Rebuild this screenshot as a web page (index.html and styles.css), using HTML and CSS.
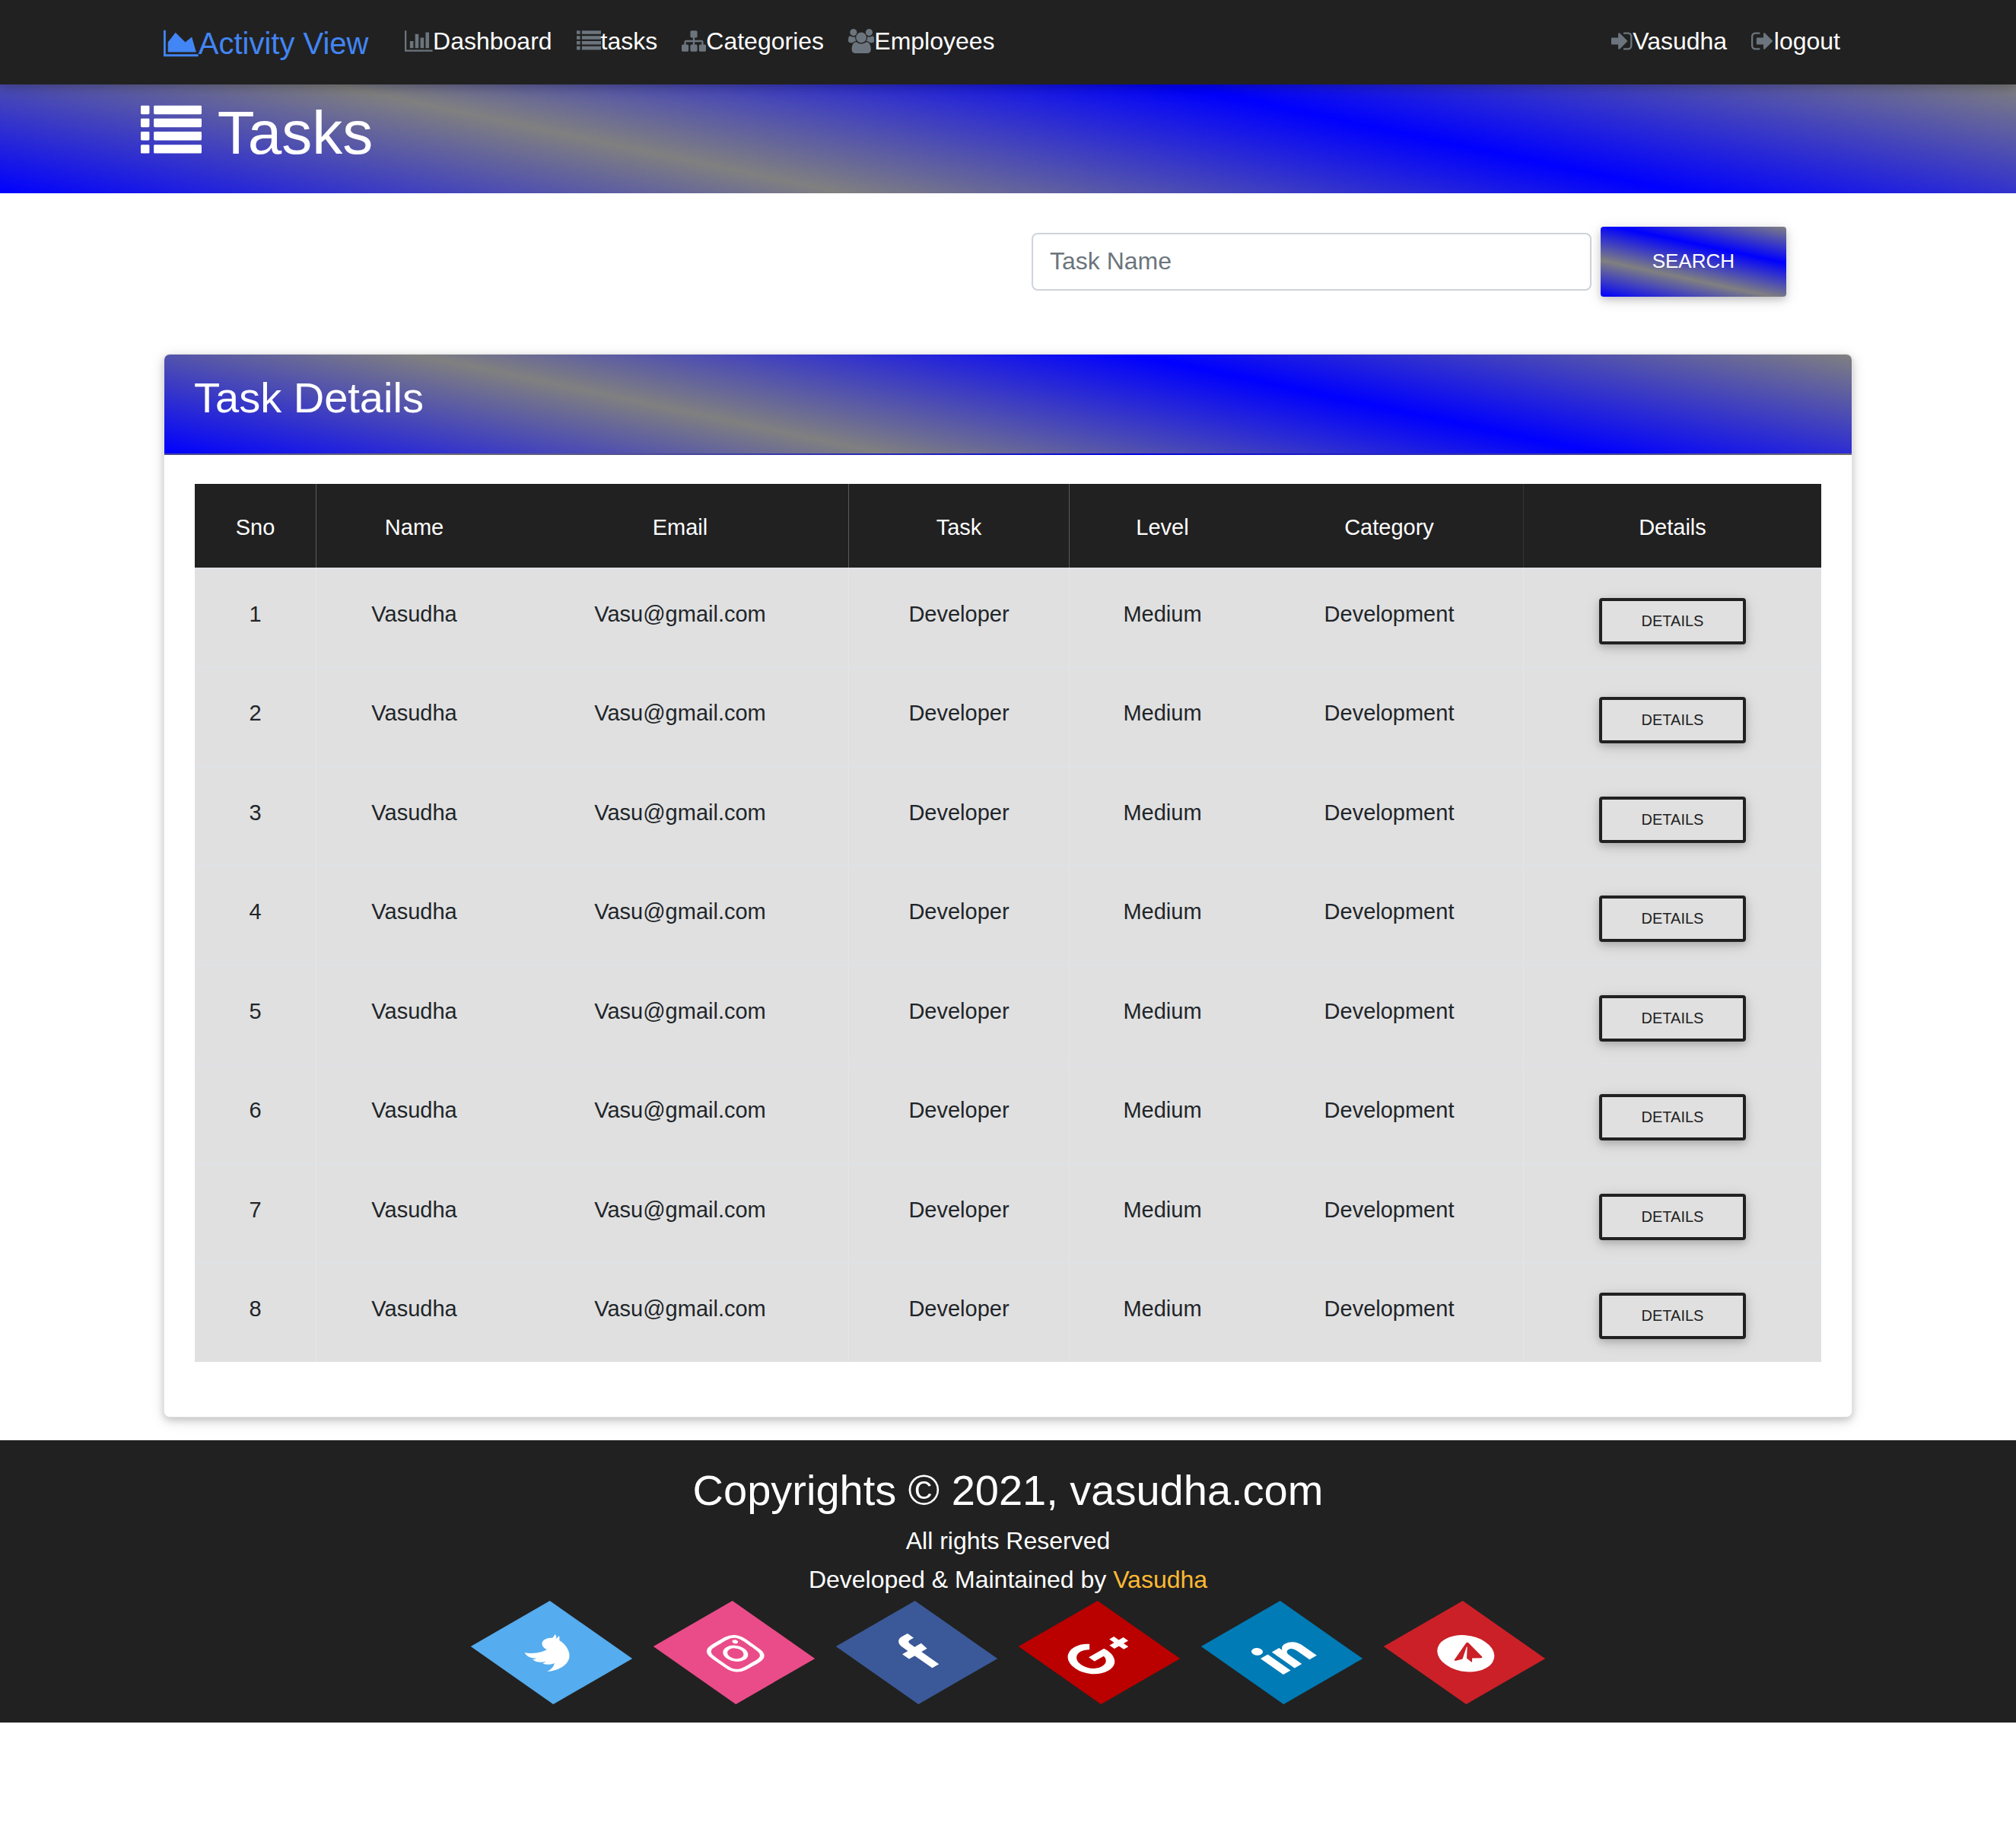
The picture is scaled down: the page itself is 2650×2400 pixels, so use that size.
FILE: index.html
```html
<!DOCTYPE html>
<html lang="en">
<head>
<meta charset="utf-8">
<meta name="viewport" content="width=device-width, initial-scale=1">
<title>Activity View - Tasks</title>
<link rel="stylesheet" href="styles.css">
</head>
<body>
<nav class="navbar">
  <div class="container navbar-inner">
    <a class="brand" href="#"><svg class="brand-icon" viewBox="0 0 2048 1792" aria-hidden="true"><path d="M2048 1536v128h-2048v-1536h128v1408h1920zm-384-1024l256 896h-1664v-576l448-576 576 576z"/></svg>Activity View</a>
    <ul class="nav-list">
      <li><a class="nav-link" href="#"><svg class="nav-icon" viewBox="0 0 2048 1792" aria-hidden="true"><path d="M640 896v512h-256v-512h256zm384-512v1024h-256v-1024h256zm1024 1152v128h-2048v-1536h128v1408h1920zm-640-896v768h-256v-768h256zm384-384v1152h-256v-1152h256z"/></svg>Dashboard</a></li>
      <li><a class="nav-link" href="#"><svg class="nav-icon" viewBox="0 0 1792 1792" aria-hidden="true"><path d="M0 128h256v256H0zM0 512h256v256H0zM0 896h256v256H0zM0 1280h256v256H0zM384 128h1408v256H384zM384 512h1408v256H384zM384 896h1408v256H384zM384 1280h1408v256H384z"/></svg>tasks</a></li>
      <li><a class="nav-link" href="#"><svg class="nav-icon" viewBox="0 0 1792 1792" aria-hidden="true"><path d="M1792 1248v320q0 40-28 68t-68 28h-320q-40 0-68-28t-28-68v-320q0-40 28-68t68-28h96v-192h-512v192h96q40 0 68 28t28 68v320q0 40-28 68t-68 28h-320q-40 0-68-28t-28-68v-320q0-40 28-68t68-28h96v-192h-512v192h96q40 0 68 28t28 68v320q0 40-28 68t-68 28h-320q-40 0-68-28t-28-68v-320q0-40 28-68t68-28h96v-192q0-52 38-90t90-38h512v-192h-96q-40 0-68-28t-28-68v-320q0-40 28-68t68-28h320q40 0 68 28t28 68v320q0 40-28 68t-68 28h-96v192h512q52 0 90 38t38 90v192h96q40 0 68 28t28 68z"/></svg>Categories</a></li>
      <li><a class="nav-link" href="#"><svg class="nav-icon" viewBox="0 0 1920 1792" aria-hidden="true"><path d="M593 896q-162 5-265 128h-134q-82 0-138-40.5t-56-118.5q0-353 124-353 6 0 43.5 21t97.5 42.5 119 21.5q67 0 133-23-5 37-5 66 0 139 81 256zm1071 637q0 120-73 189.5t-194 69.5h-874q-121 0-194-69.5t-73-189.5q0-53 3.5-103.5t14-109 26.5-108.5 43-97.5 62-81 85.5-53.5 111.5-20q10 0 43 21.5t73 48 107 48 135 21.5 135-21.5 107-48 73-48 43-21.5q61 0 111.5 20t85.5 53.5 62 81 43 97.5 26.5 108.5 14 109 3.5 103.5zm-1024-1277q0 106-75 181t-181 75-181-75-75-181 75-181 181-75 181 75 75 181zm704 384q0 159-112.5 271.5t-271.5 112.5-271.5-112.5-112.5-271.5 112.5-271.5 271.5-112.5 271.5 112.5 112.5 271.5zm576 225q0 78-56 118.5t-138 40.5h-134q-103-123-265-128 81-117 81-256 0-29-5-66 66 23 133 23 59 0 119-21.5t97.5-42.5 43.5-21q124 0 124 353zm-128-609q0 106-75 181t-181 75-181-75-75-181 75-181 181-75 181 75 75 181z"/></svg>Employees</a></li>
    </ul>
    <ul class="nav-list nav-list-end">
      <li><a class="nav-link" href="#"><svg class="nav-icon" viewBox="0 0 1600 1792" aria-hidden="true"><path d="M1184 896q0 26-19 45l-544 544q-19 19-45 19t-45-19-19-45v-288h-448q-26 0-45-19t-19-45v-384q0-26 19-45t45-19h448v-288q0-26 19-45t45-19 45 19l544 544q19 19 19 45zm352-352v704q0 119-84.500 203.500t-203.500 84.500h-320q-13 0-22.500-9.500t-9.500-22.500q0-4-1-20t-.5-26.500 3-23.500 10-19.500 20.500-6.500h320q66 0 113-47t47-113v-704q0-66-47-113t-113-47h-312l-11.500-1-11.500-3-8-5.500-7-9-2-13.500q0-4-1-20t-.5-26.500 3-23.500 10-19.500 20.500-6.500h320q119 0 203.500 84.500t84.500 203.500z"/></svg>Vasudha</a></li>
      <li><a class="nav-link" href="#"><svg class="nav-icon" viewBox="0 0 1664 1792" aria-hidden="true"><path d="M640 1440q0 4 1 20t.5 26.500-3 23.500-10 19.500-20.500 6.500h-320q-119 0-203.500-84.500t-84.500-203.500v-704q0-119 84.500-203.500t203.500-84.500h320q13 0 22.500 9.500t9.500 22.500q0 4 1 20t.5 26.500-3 23.500-10 19.500-20.500 6.500h-320q-66 0-113 47t-47 113v704q0 66 47 113t113 47h312l11.500 1 11.500 3 8 5.500 7 9 2 13.500zm928-544q0 26-19 45l-544 544q-19 19-45 19t-45-19-19-45v-288h-448q-26 0-45-19t-19-45v-384q0-26 19-45t45-19h448v-288q0-26 19-45t45-19 45 19l544 544q19 19 19 45z"/></svg>logout</a></li>
    </ul>
  </div>
</nav>

<header class="page-header">
  <h1 class="page-title"><svg class="title-icon" viewBox="0 0 1792 1792" aria-hidden="true"><rect y="128" width="256" height="256" rx="32"/><rect y="512" width="256" height="256" rx="32"/><rect y="896" width="256" height="256" rx="32"/><rect y="1280" width="256" height="256" rx="32"/><rect x="384" y="128" width="1408" height="256" rx="32"/><rect x="384" y="512" width="1408" height="256" rx="32"/><rect x="384" y="896" width="1408" height="256" rx="32"/><rect x="384" y="1280" width="1408" height="256" rx="32"/></svg> Tasks</h1>
</header>

<main class="container">
  <form class="search-form">
    <input class="search-input" type="text" placeholder="Task Name" aria-label="Task Name">
    <button class="search-button" type="button">SEARCH</button>
  </form>

  <section class="card">
    <div class="card-header"><h2 class="card-title">Task Details</h2></div>
    <div class="card-body">
      <table class="task-table">
        <colgroup>
          <col class="col-sno"><col class="col-name"><col class="col-email"><col class="col-task"><col class="col-level"><col class="col-category"><col class="col-details">
        </colgroup>
        <thead>
          <tr><th>Sno</th><th>Name</th><th>Email</th><th>Task</th><th>Level</th><th>Category</th><th>Details</th></tr>
        </thead>
        <tbody>
          <tr><td>1</td><td>Vasudha</td><td>Vasu@gmail.com</td><td>Developer</td><td>Medium</td><td>Development</td><td><button class="details-button" type="button">DETAILS</button></td></tr>
          <tr><td>2</td><td>Vasudha</td><td>Vasu@gmail.com</td><td>Developer</td><td>Medium</td><td>Development</td><td><button class="details-button" type="button">DETAILS</button></td></tr>
          <tr><td>3</td><td>Vasudha</td><td>Vasu@gmail.com</td><td>Developer</td><td>Medium</td><td>Development</td><td><button class="details-button" type="button">DETAILS</button></td></tr>
          <tr><td>4</td><td>Vasudha</td><td>Vasu@gmail.com</td><td>Developer</td><td>Medium</td><td>Development</td><td><button class="details-button" type="button">DETAILS</button></td></tr>
          <tr><td>5</td><td>Vasudha</td><td>Vasu@gmail.com</td><td>Developer</td><td>Medium</td><td>Development</td><td><button class="details-button" type="button">DETAILS</button></td></tr>
          <tr><td>6</td><td>Vasudha</td><td>Vasu@gmail.com</td><td>Developer</td><td>Medium</td><td>Development</td><td><button class="details-button" type="button">DETAILS</button></td></tr>
          <tr><td>7</td><td>Vasudha</td><td>Vasu@gmail.com</td><td>Developer</td><td>Medium</td><td>Development</td><td><button class="details-button" type="button">DETAILS</button></td></tr>
          <tr><td>8</td><td>Vasudha</td><td>Vasu@gmail.com</td><td>Developer</td><td>Medium</td><td>Development</td><td><button class="details-button" type="button">DETAILS</button></td></tr>
        </tbody>
      </table>
    </div>
  </section>
</main>

<footer class="footer">
  <h2 class="copyright">Copyrights © 2021, vasudha.com</h2>
  <p class="footer-text">All rights Reserved</p>
  <p class="footer-text">Developed &amp; Maintained by <a class="footer-link" href="#">Vasudha</a></p>
  <ul class="social-list">
    <li><a class="social twitter" href="#" aria-label="Twitter"><svg class="social-icon" viewBox="0 0 1792 1792"><path d="M1684 408q-67 98-162 167 1 14 1 42 0 130-38 259.500t-115.500 248.500-184.500 210.500-258 146-323 54.500q-271 0-496-145 35 4 78 4 225 0 401-138-105-2-188-64.500t-114-159.500q33 5 61 5 43 0 85-11-112-23-185.500-111.500t-73.500-205.500v-4q68 38 146 41-66-44-105-115t-39-154q0-88 44-163 121 149 294.500 238.500t371.500 99.500q-8-38-8-74 0-134 94.500-228.500t228.500-94.500q140 0 236 102 109-21 205-78-37 115-142 178 93-10 186-50z"/></svg></a></li>
    <li><a class="social instagram" href="#" aria-label="Instagram"><svg class="social-icon" viewBox="0 0 1792 1792"><path d="M1152 896q0-106-75-181t-181-75-181 75-75 181 75 181 181 75 181-75 75-181zm138 0q0 164-115 279t-279 115-279-115-115-279 115-279 279-115 279 115 115 279zm108-410q0 38-27 65t-65 27-65-27-27-65 27-65 65-27 65 27 27 65zm-502-220q-7 0-76.500-.5t-105.500 0-96.500 3-103 10-71.500 18.500q-50 20-88 58t-58 88q-11 29-18.500 71.500t-10 103-3 96.500 0 105.500.5 76.500-.5 76.500 0 105.500 3 96.500 10 103 18.500 71.500q20 50 58 88t88 58q29 11 71.500 18.500t103 10 96.500 3 105.500 0 76.500-.5 76.500.5 105.500 0 96.500-3 103-10 71.500-18.500q50-20 88-58t58-88q11-29 18.500-71.500t10-103 3-96.500 0-105.500-.5-76.500.5-76.500 0-105.500-3-96.500-10-103-18.500-71.500q-20-50-58-88t-88-58q-29-11-71.500-18.500t-103-10-96.500-3-105.500 0-76.500.5zm768 630q0 229-5 317-10 208-124 322t-322 124q-88 5-317 5t-317-5q-208-10-322-124t-124-322q-5-88-5-317t5-317q10-208 124-322t322-124q88-5 317-5t317 5q208 10 322 124t124 322q5 88 5 317z"/></svg></a></li>
    <li><a class="social facebook" href="#" aria-label="Facebook"><svg class="social-icon" viewBox="0 0 1792 1792"><path d="M1343 12v264h-157q-86 0-116 36t-30 108v189h293l-39 296h-254v759h-306v-759h-255v-296h255v-218q0-186 104-288.500t277-102.500q147 0 228 12z"/></svg></a></li>
    <li><a class="social google" href="#" aria-label="Google Plus"><svg class="social-icon" viewBox="0 0 2304 1792"><path d="M1437 913q0 208-87 370.500t-248 254-369 91.500q-149 0-285-58t-234-156-156-234-58-285 58-285 156-234 234-156 285-58q286 0 491 192l-199 191q-117-113-292-113-123 0-227.500 62t-165.500 168.500-61 232.500 61 232.500 165.500 168.500 227.500 62q83 0 152.500-23t114.500-57.500 78.500-78.500 49-83 21.500-74h-416v-252h692q12 63 12 122zm867-122v210h-209v209h-210v-209h-209v-210h209v-209h210v209h209z"/></svg></a></li>
    <li><a class="social linkedin" href="#" aria-label="LinkedIn"><svg class="social-icon" viewBox="0 0 1792 1792"><path d="M477 625v991h-330v-991h330zm21-306q1 73-50.500 122t-135.500 49h-2q-82 0-132-49t-50-122q0-74 51.500-122.500t134.500-48.500 133 48.500 51 122.500zm1166 729v568h-329v-530q0-105-40.500-164.500t-126.500-59.500q-63 0-105.500 34.500t-63.500 85.500q-11 30-11 81v553h-329q2-399 2-647t-1-296l-1-48h329v144h-2q20-32 41-56t56.500-52 87-43.500 114.500-15.500q171 0 275 113.500t104 332.500z"/></svg></a></li>
    <li><a class="social telegram" href="#" aria-label="Telegram"><svg class="social-icon" viewBox="0 0 1792 1792"><path fill-rule="evenodd" d="M1189 1307l147-693q9-44-10.500-63t-51.500-7l-864 333q-29 11-39.500 25t-2.500 26.500 32 19.500l221 69 513-323q21-14 32-6 7 5-4 15l-415 375-16 228q23 0 45-22l108-105 224 165q64 36 81-37zm603-411q0 182-71 348t-191 286-286 191-348 71-348-71-286-191-191-286-71-348 71-348 191-286 286-191 348-71 348 71 286 191 191 286 71 348z"/></svg></a></li>
  </ul>
</footer>
</body>
</html>
```
FILE: styles.css
```css
* { box-sizing: border-box; }

:root {
  --dark: #212121;
  --stripes: linear-gradient(12deg, blue, gray, blue, gray);
  --shadow: 0 4px 10px rgba(0, 0, 0, .16), 0 4px 20px rgba(0, 0, 0, .12);
}

body {
  margin: 0;
  background: #fff;
  color: #212529;
  font-family: "Liberation Sans", Arial, sans-serif;
  font-size: 32px;
  line-height: 48px;
}

h1, h2, p, ul { margin: 0; padding: 0; font-weight: 400; }
ul { list-style: none; }
a { color: inherit; text-decoration: none; }
svg { fill: currentColor; }
button, input { font-family: inherit; }

.container {
  width: 100%;
  max-width: 2280px;
  margin: 0 auto;
  padding: 0 30px;
}

/* Top bar */
.navbar {
  position: relative;
  padding: 14px 0 15px;
  background: var(--dark);
  color: #fff;
  box-shadow: var(--shadow);
}
.navbar-inner { display: flex; align-items: flex-start; }
.brand {
  margin-right: 32px;
  padding: 13px 0 9px;
  color: #4285f4;
  font-size: 40px;
  line-height: 60px;
}
.brand-icon { height: 40px; vertical-align: -6px; }
.nav-list { display: flex; }
.nav-list-end { margin-left: auto; }
.nav-link { display: block; padding: 16px; }
.nav-icon { height: 32px; vertical-align: -5px; color: #6c757d; }

/* Page heading */
.page-header { padding: 16px 0 31px; background: var(--stripes); color: #fff; }
.page-title {
  max-width: 2280px;
  margin: 0 auto;
  font-size: 80px;
  line-height: 96px;
}
.title-icon { height: 80px; vertical-align: -11px; }

/* Search */
.search-form {
  display: flex;
  align-items: center;
  gap: 12px;
  max-width: 992px;
  margin: 44px 87px 75px auto;
}
.search-input {
  flex: 1;
  min-width: 0;
  height: 76px;
  padding: 10px 22px 12px;
  border: 2px solid #ced4da;
  border-radius: 8px;
  background: #fff;
  color: #495057;
  font-size: 32px;
}
.search-input::placeholder { color: #6c757d; opacity: 1; }
.search-button {
  padding: 26px 68px 28px;
  border: 0;
  border-radius: 4px;
  background: var(--stripes);
  box-shadow: var(--shadow);
  color: #fff;
  font-size: 26px;
  line-height: 38px;
}

/* Task card */
.card {
  margin-bottom: 30px;
  border: 1px solid #e4e4e4;
  border-radius: 8px;
  background: #fff;
  box-shadow: var(--shadow);
}
.card-header {
  padding: 23px 39px 40px;
  border-bottom: 2px solid rgba(0, 0, 0, .125);
  border-radius: 7px 7px 0 0;
  background: var(--stripes);
  color: #fff;
}
.card-title { font-size: 56px; line-height: 67px; }
.card-body { padding: 38px 40px 72px; }

.task-table {
  width: 100%;
  table-layout: fixed;
  border-spacing: 0;
  background: #e0e0e0;
  font-size: 29px;
  line-height: 43px;
  text-align: center;
}
.col-sno { width: 159px; }
.col-name { width: 258px; }
.col-email { width: 442px; }
.col-task { width: 290px; }
.col-level { width: 245px; }
.col-category { width: 352px; }
.col-details { width: 392px; }
.task-table th {
  height: 110px;
  padding: 36px 0 31px;
  background: var(--dark);
  color: #fff;
  font-weight: 400;
}
.task-table td {
  height: 130px;
  padding: 38px 0 28px;
  border-top: 2px solid #dee2e6;
  vertical-align: top;
}
.task-table tr:nth-child(even) td { height: 131px; }
.task-table td:nth-child(2),
.task-table td:nth-child(4),
.task-table td:nth-child(5),
.task-table td:nth-child(7) { border-left: 1px solid #e5e5e5; }
.task-table th:nth-child(2),
.task-table th:nth-child(4),
.task-table th:nth-child(5) { border-left: 1px solid #5a5a5a; }
.task-table th:nth-child(7) { border-left: 1px solid #333; }

.details-button {
  display: block;
  margin: 0 auto;
  padding: 11px 52px;
  border: 4px solid var(--dark);
  border-radius: 4px;
  background: transparent;
  box-shadow: var(--shadow);
  color: var(--dark);
  font-size: 20px;
  line-height: 31px;
}

/* Footer */
.footer {
  padding: 32px 0;
  background: var(--dark);
  color: #fff;
  text-align: center;
}
.copyright { margin-bottom: 8px; font-size: 56px; line-height: 67px; }
.footer-text { line-height: 51px; }
.footer-link { color: #ffbb33; }
.social-list {
  display: flex;
  justify-content: center;
  gap: 120px;
  margin-top: 10px;
}
.social {
  display: flex;
  align-items: center;
  justify-content: center;
  width: 120px;
  height: 120px;
  padding-top: 4px;
  transform: rotate(-30deg) skew(25deg);
}
.social-icon { height: 60px; }
.twitter { background: #55acee; }
.instagram { background: #ea4c89; }
.facebook { background: #3b5998; }
.google { background: #bb0000; }
.linkedin { background: #007bb5; }
.telegram { background: #cb2027; }
```
